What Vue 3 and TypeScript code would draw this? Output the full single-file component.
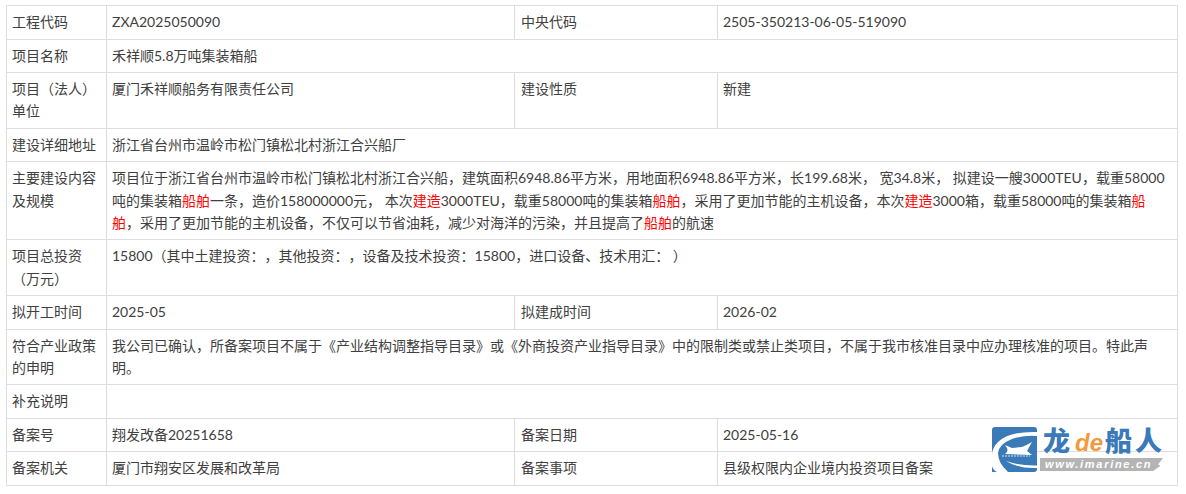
<script setup lang="ts">
interface Seg { t: string; red?: boolean }
const desc: Seg[] = [
  { t: '项目位于浙江省台州市温岭市松门镇松北村浙江合兴船，建筑面积6948.86平方米，用地面积6948.86平方米，长199.68米， 宽34.8米， 拟建设一艘3000TEU，载重58000吨的集装箱' },
  { t: '船舶', red: true },
  { t: '一条，造价158000000元， 本次' },
  { t: '建造', red: true },
  { t: '3000TEU，载重58000吨的集装箱' },
  { t: '船舶', red: true },
  { t: '，采用了更加节能的主机设备，本次' },
  { t: '建造', red: true },
  { t: '3000箱，载重58000吨的集装箱' },
  { t: '船舶', red: true },
  { t: '，采用了更加节能的主机设备，不仅可以节省油耗，减少对海洋的污染，并且提高了' },
  { t: '船舶', red: true },
  { t: '的航速' },
]
</script>

<template>
  <div class="page">
    <table class="info">
      <colgroup>
        <col class="c1" /><col class="c2" /><col class="c3" /><col class="c4" />
      </colgroup>
      <tbody>
        <tr><td>工程代码</td><td>ZXA2025050090</td><td>中央代码</td><td>2505-350213-06-05-519090</td></tr>
        <tr><td>项目名称</td><td colspan="3">禾祥顺5.8万吨集装箱船</td></tr>
        <tr><td>项目（法人）单位</td><td>厦门禾祥顺船务有限责任公司</td><td>建设性质</td><td>新建</td></tr>
        <tr><td>建设详细地址</td><td colspan="3">浙江省台州市温岭市松门镇松北村浙江合兴船厂</td></tr>
        <tr>
          <td>主要建设内容及规模</td>
          <td colspan="3"><template v-for="(s, i) in desc" :key="i"><span v-if="s.red" class="red">{{ s.t }}</span><template v-else>{{ s.t }}</template></template></td>
        </tr>
        <tr><td>项目总投资（万元）</td><td colspan="3">15800（其中土建投资：，其他投资：，设备及技术投资：15800，进口设备、技术用汇： ）</td></tr>
        <tr><td>拟开工时间</td><td>2025-05</td><td>拟建成时间</td><td>2026-02</td></tr>
        <tr><td>符合产业政策的申明</td><td colspan="3">我公司已确认，所备案项目不属于《产业结构调整指导目录》或《外商投资产业指导目录》中的限制类或禁止类项目，不属于我市核准目录中应办理核准的项目。特此声明。</td></tr>
        <tr><td>补充说明</td><td colspan="3"></td></tr>
        <tr><td>备案号</td><td>翔发改备20251658</td><td>备案日期</td><td>2025-05-16</td></tr>
        <tr><td>备案机关</td><td>厦门市翔安区发展和改革局</td><td>备案事项</td><td>县级权限内企业境内投资项目备案</td></tr>
      </tbody>
    </table>

    <div class="logo">
      <svg class="mark" width="45" height="45" viewBox="0 0 45 45">
        <rect width="45" height="45" rx="3" fill="#3a7ab8" />
        <path d="M45 5Q18 4 6 15Q0 21 0 28V39Q1 43 5 45H16Q6 36 6 26Q7 17 20 12Q32 8 45 9Z" fill="#fff" />
        <path d="M0 41Q1 44 4 45H0Z" fill="#3a7ab8" />
        <path d="M14 34Q27 42 45 41V38.5Q28 39 14 34Z" fill="#fff" />
        <path d="M13 18L20 21L30 20Q35 18 40 15L35 24L40 28L13 27Q18 24 13 18Z" fill="#fff" />
        <path d="M10 29H38" stroke="#d6e4f2" stroke-width="1" stroke-dasharray="2 1" />
      </svg>
      <div class="brand">
        <div class="name"><span class="zh">龙</span><span class="de">de</span><span class="zh">船人</span></div>
        <div class="url">www.imarine.cn</div>
      </div>
    </div>
  </div>
</template>

<style>
html, body { margin: 0; background: #fff; }
</style>

<style scoped>
.page {
  position: relative;
  width: 1186px;
  height: 494px;
  overflow: hidden;
  padding: 5.2px 0 0 6px;
  box-sizing: border-box;
  font-family: "Lato", "Noto Sans CJK SC", sans-serif;
  font-size: 14px;
  line-height: 22.4px;
  color: #404040;
  text-spacing-trim: space-all;
}
.info {
  width: 1172px;
  table-layout: fixed;
  border-collapse: collapse;
}
.c1 { width: 100px; }
.c2 { width: 408px; }
.c3 { width: 203px; }
.info td {
  border: 1px solid #ddd;
  padding: 5px;
  vertical-align: top;
  word-break: break-all;
}
.info td:nth-child(3) { padding-left: 6px; }
.red { color: #f00; }
.logo {
  position: absolute;
  left: 992px;
  top: 427px;
  display: flex;
  gap: 3px;
}
.brand { display: flex; flex-direction: column; }
.name {
  height: 29px;
  line-height: 25px;
  white-space: nowrap;
  font-family: "Noto Sans CJK SC", sans-serif;
  font-weight: 900;
  color: #3a7ab8;
  font-size: 27px;
  letter-spacing: 3px;
  padding-left: 3px;
}
.de {
  font-family: "Liberation Sans", sans-serif;
  font-style: italic;
  font-weight: 700;
  font-size: 24px;
  letter-spacing: 0;
  color: #f39a3c;
  margin: 0 2px 0 2px;
}
.url {
  margin-top: 2px;
  width: 123px;
  height: 13px;
  line-height: 13px;
  background: #b4b4b4;
  color: #fff;
  font-family: "Liberation Sans", sans-serif;
  font-style: italic;
  font-weight: 700;
  font-size: 11px;
  letter-spacing: 1.7px;
  padding-left: 5px;
  box-sizing: border-box;
  clip-path: polygon(0 0, 100% 0, 96% 50%, 98% 60%, 92% 100%, 0 100%);
}
</style>
